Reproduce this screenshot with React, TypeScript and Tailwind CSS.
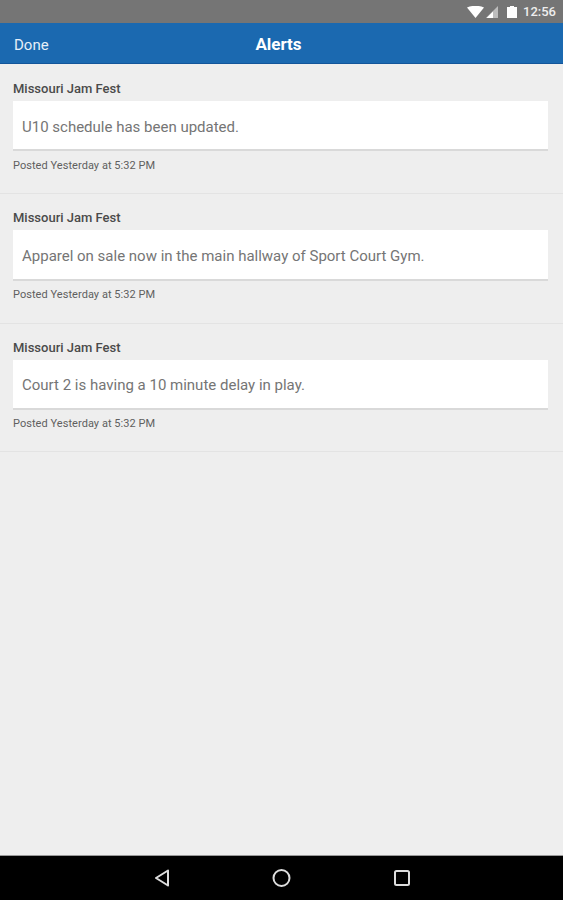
import React from "react";

function Alert({ text, row, card, posted }: { text: string; row: string; card: string; posted: string }) {
  return (
    <div className={`${row} pl-[13px] pr-[15px] border-b border-[#e3e3e3] flex flex-col items-stretch`}>
      <div className="text-[13px] leading-[14px] font-medium text-[#4a4a4a]">Missouri Jam Fest</div>
      <div className={`${card} bg-white border-b-2 border-[#d9d9d9] flex items-center pl-[9px] text-[15px] text-[#757575]`}>
        {text}
      </div>
      <div className={`${posted} text-[11px] leading-[12px] tracking-[0.05px] text-[#5f5f5f]`}>Posted Yesterday at 5:32 PM</div>
    </div>
  );
}

export default function App() {
  return (
    <div className="w-[563px] h-[900px] flex flex-col bg-[#eeeeee] overflow-hidden font-['Roboto',sans-serif]">
      <div className="h-[23px] bg-[#757575] flex items-center justify-end pr-[7px] text-white">
        <svg width="17" height="12" viewBox="0 0 17 12" className="mr-[2px]">
          <path d="M0 1.5 Q8.5 -2 17 1.5 L8.5 12 Z" fill="#fff" />
        </svg>
        <svg width="12" height="12" viewBox="0 0 12 12" className="mr-[9px]">
          <path d="M12 0 V12 H0 Z" fill="#bdbdbd" />
          <path d="M7 5.5 V12 H0.5 Z" fill="#fff" />
        </svg>
        <svg width="10" height="12" viewBox="0 0 10 12" className="mr-[6px]">
          <path d="M0 1 H3 V0 H7 V1 H10 V12 H0 Z" fill="#fff" />
        </svg>
        <span className="text-[13px] font-medium text-[#eeeeee]">12:56</span>
      </div>
      <div className="h-[41px] bg-[#1b69b0] border-b border-[#13559a] relative flex items-center justify-center pt-[4px] pr-[6px] text-white">
        <span className="absolute left-[14px] text-[15px] text-[#e6eff8]">Done</span>
        <span className="text-[17px] font-bold">Alerts</span>
      </div>
      <div className="flex-1">
        <Alert
          row="h-[130px] pt-[18px]"
          card="mt-[5px] h-[50px] pt-[4px]"
          posted="mt-[9px]"
          text="U10 schedule has been updated."
        />
        <Alert
          row="h-[130px] pt-[17px]"
          card="mt-[5px] h-[51px] pt-[3px]"
          posted="mt-[8px]"
          text="Apparel on sale now in the main hallway of Sport Court Gym."
        />
        <Alert
          row="h-[128px] pt-[17px]"
          card="mt-[5px] h-[50px] pt-[3px]"
          posted="mt-[8px]"
          text="Court 2 is having a 10 minute delay in play."
        />
      </div>
      <div className="h-[45px] bg-black border-t border-[#999999] flex items-center">
        <svg width="563" height="44" viewBox="0 0 563 44" fill="none" stroke="#dddddd" strokeWidth="2">
          <path d="M168 14.5 L156 22 L168 29.5 Z" strokeLinejoin="round" />
          <circle cx="281.5" cy="22" r="8" />
          <rect x="395" y="15" width="14" height="14" rx="1.5" />
        </svg>
      </div>
    </div>
  );
}
